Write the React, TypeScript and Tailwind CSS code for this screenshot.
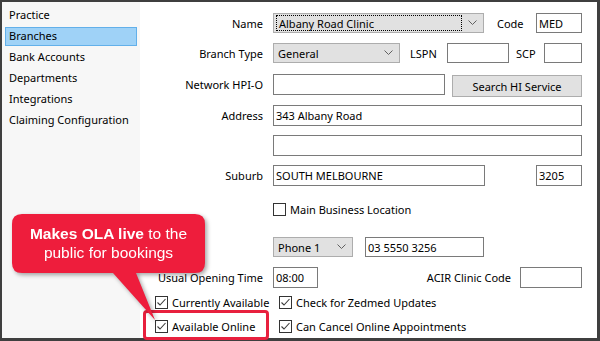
import React from 'react';

const sideItems = ['Practice', 'Branches', 'Bank Accounts', 'Departments', 'Integrations', 'Claiming Configuration'];

const Chevron = () => (
  <svg width="9" height="6" viewBox="0 0 9 6" className="shrink-0">
    <polyline points="0.5,0.5 4.5,4.5 8.5,0.5" fill="none" stroke="#606060" strokeWidth="1" />
  </svg>
);

const Select = ({ value, width, focus }: { value: string; width: string; focus?: boolean }) => (
  <div className={`${width} h-[20px] bg-[#e1e1e1] border border-[#adadad] flex items-center pl-[2px] pr-[6px]`}>
    <div className={`flex-1 h-[16px] flex items-center pl-[2px] ${focus ? 'border border-dotted border-black' : ''}`}>
      <span className="leading-none">{value}</span>
    </div>
    <div className="pl-[6px]">
      <Chevron />
    </div>
  </div>
);

const Input = ({ value = '', width, h = 'h-[21px]' }: { value?: string; width: string; h?: string }) => (
  <div className={`${width} ${h} border border-[#7a7a7a] bg-white flex items-center pl-[2px]`}>
    <span className="leading-none">{value}</span>
  </div>
);

const Check = ({ checked, label }: { checked?: boolean; label: string }) => (
  <div className="flex items-center h-[13px]">
    <div className="w-[13px] h-[13px] border border-[#333333] bg-white flex items-center justify-center">
      {checked && (
        <svg width="11" height="11" viewBox="0 0 11 11">
          <polyline points="1.5,5.5 4,8 9.5,2" fill="none" stroke="#3a3a3a" strokeWidth="1.1" />
        </svg>
      )}
    </div>
    <span className="ml-[4px] leading-none whitespace-nowrap">{label}</span>
  </div>
);

const Label = ({ children }: { children: React.ReactNode }) => (
  <div className="w-[123px] shrink-0 text-right mr-[10px] leading-none whitespace-nowrap">{children}</div>
);

export default function App() {
  return (
    <div className="w-[600px] h-[341px] bg-[#3f3f3f] pt-[2px] pl-[2px] pr-[3px] pb-[3px] font-['Noto_Sans',sans-serif] text-[11px] text-black relative overflow-hidden">
      <div className="flex h-full">
        {/* Sidebar */}
        <aside className="w-[138px] shrink-0 bg-[#f7f7f7] pt-[4px] px-[3px]">
          {sideItems.map((item) => (
            <div
              key={item}
              className={`h-[19px] mb-[2px] flex items-center pl-[3px] border whitespace-nowrap ${
                item === 'Branches' ? 'bg-[#9fd2f7] border-[#62b0ea]' : 'border-transparent'
              }`}
            >
              {item}
            </div>
          ))}
        </aside>

        {/* Form */}
        <main className="flex-1 bg-white">
          <div className="w-[442px] flex flex-col">
            <div className="flex items-center mt-[11px]">
              <Label>Name</Label>
              <Select value="Albany Road Clinic" width="w-[211px]" focus />
              <div className="w-[52px] pl-[13px] leading-none">Code</div>
              <Input value="MED" width="w-[46px]" h="h-[20px]" />
            </div>

            <div className="flex items-center mt-[10px]">
              <Label>Branch Type</Label>
              <Select value="General" width="w-[127px]" />
              <div className="w-[47px] pl-[10px] leading-none">LSPN</div>
              <Input width="w-[62px]" h="h-[20px]" />
              <div className="w-[35px] pl-[7px] leading-none">SCP</div>
              <Input width="w-[38px]" h="h-[20px]" />
            </div>

            <div className="flex items-start mt-[11px] h-[23px]">
              <div className="h-[21px] flex items-center">
                <Label>Network HPI-O</Label>
              </div>
              <Input width="w-[172px]" />
              <button className="ml-[7px] mt-[1px] w-[130px] h-[22px] bg-[#e1e1e1] border border-[#adadad] leading-none">
                Search HI Service
              </button>
            </div>

            <div className="flex items-center mt-[8px]">
              <Label>Address</Label>
              <Input value="343 Albany Road" width="w-[309px]" />
            </div>

            <div className="flex items-center mt-[9px]">
              <Label>{''}</Label>
              <Input width="w-[309px]" />
            </div>

            <div className="flex items-center mt-[9px]">
              <Label>Suburb</Label>
              <Input value="SOUTH MELBOURNE" width="w-[212px]" />
              <div className="ml-auto">
                <Input value="3205" width="w-[46px]" />
              </div>
            </div>

            <div className="flex items-center mt-[17px] pl-[133px]">
              <Check label="Main Business Location" />
            </div>

            <div className="flex items-center mt-[21px] pl-[133px]">
              <Select value="Phone 1" width="w-[80px]" />
              <div className="ml-[12px]">
                <Input value="03 5550 3256" width="w-[119px]" h="h-[20px]" />
              </div>
            </div>

            <div className="flex items-center mt-[10px]">
              <Label>Usual Opening Time</Label>
              <Input value="08:00" width="w-[45px]" />
              <div className="flex-1 text-right pr-[9px] leading-none">ACIR Clinic Code</div>
              <Input width="w-[62px]" />
            </div>

            <div className="flex items-center mt-[8px] pl-[15px]">
              <div className="w-[124px]">
                <Check checked label="Currently Available" />
              </div>
              <Check checked label="Check for Zedmed Updates" />
            </div>

            <div className="flex items-center mt-[11px] pl-[15px]">
              <div className="w-[124px]">
                <Check checked label="Available Online" />
              </div>
              <Check checked label="Can Cancel Online Appointments" />
            </div>
          </div>
        </main>
      </div>

      {/* Highlight around Available Online */}
      <div className="absolute left-[143px] top-[310px] w-[126px] h-[30px] border-[3px] border-[#e8203e] rounded-[4px]" />

      {/* Callout */}
      <div className="absolute left-[12px] top-[214px] w-[196px] h-[112px] drop-shadow-[2px_2px_2px_rgba(0,0,0,0.35)]">
        <svg width="196" height="112" viewBox="0 0 196 112" className="absolute inset-0">
          <path
            d="M10 0 H183 Q193 0 193 10 V49 Q193 59 183 59 H124 L143 106 L101 59 H10 Q0 59 0 49 V10 Q0 0 10 0 Z"
            fill="#ee1d3c"
          />
        </svg>
        <div className="absolute left-0 top-0 w-[193px] h-[59px] flex flex-col items-center justify-center text-white font-['Liberation_Sans',Arial,sans-serif] text-[15.5px] leading-[19px] text-center pb-[1px]">
          <div>
            <span className="font-bold">Makes OLA live</span> to the
          </div>
          <div>public for bookings</div>
        </div>
      </div>
    </div>
  );
}
